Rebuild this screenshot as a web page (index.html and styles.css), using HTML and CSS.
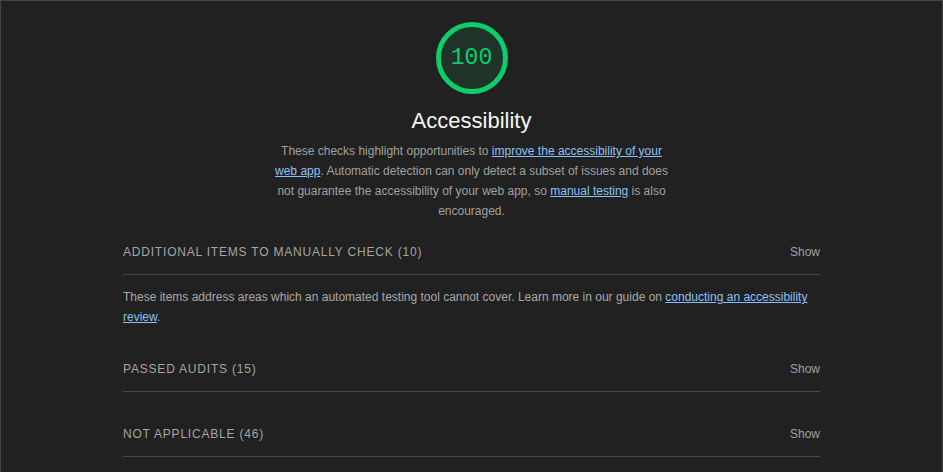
FILE: index.html
```html
<!DOCTYPE html>
<html>
<head>
<meta charset="utf-8">
<link rel="stylesheet" href="styles.css">
</head>
<body>
<div class="frame">
  <div class="category">
    <div class="gauge">
      <svg width="72" height="72" viewBox="0 0 72 72">
        <circle cx="36" cy="36" r="33.5" fill="#1f3328" stroke="#0cce6b" stroke-width="5"/>
      </svg>
      <span class="gauge-score">100</span>
    </div>
    <div class="title">Accessibility</div>
    <p class="description">These checks highlight opportunities to <a href="#">improve the accessibility of your web app</a>. Automatic detection can only detect a subset of issues and does not guarantee the accessibility of your web app, so <a href="#">manual testing</a> is also encouraged.</p>

    <div class="groups">
      <div class="group first">
        <div class="group-header"><span class="group-title">Additional items to manually check (10)</span><span class="show">Show</span></div>
        <p class="group-desc">These items address areas which an automated testing tool cannot cover. Learn more in our guide on <a href="#">conducting an accessibility review</a>.</p>
      </div>
      <div class="group">
        <div class="group-header"><span class="group-title">Passed audits (15)</span><span class="show">Show</span></div>
      </div>
      <div class="group">
        <div class="group-header"><span class="group-title">Not applicable (46)</span><span class="show">Show</span></div>
      </div>
    </div>
  </div>
</div>
</body>
</html>
```

FILE: styles.css
```css
html, body {
  margin: 0;
  padding: 0;
  background: #212121;
}
body {
  font-family: "Liberation Sans", Arial, sans-serif;
  color: #9e9e9e;
  overflow: hidden;
}
.frame {
  border: 1px solid #464646;
  border-bottom: none;
  height: 100vh;
  box-sizing: border-box;
  overflow: hidden;
}
.category {
  width: 697px;
  margin: 0 auto;
  display: flex;
  flex-direction: column;
  align-items: center;
  padding-top: 21px;
}
.gauge {
  position: relative;
  width: 72px;
  height: 72px;
}
.gauge svg {
  display: block;
}
.gauge-score {
  position: absolute;
  inset: 0;
  display: flex;
  align-items: center;
  justify-content: center;
  font-family: "Liberation Mono", monospace;
  font-size: 23px;
  color: #0cce6b;
}
.title {
  margin-top: 13px;
  font-size: 22px;
  line-height: 28px;
  color: #f5f5f5;
}
.description {
  margin: 6px 0 0;
  width: 400px;
  text-align: center;
  font-size: 12px;
  line-height: 20px;
  color: #a0a0a0;
}
a {
  color: #8cc0f8;
  text-decoration: underline;
}
.groups {
  align-self: stretch;
  margin-top: 10px;
}
.group {
  margin-top: 21px;
}
.group.first {
  margin-top: 0;
}
.group-header {
  display: flex;
  justify-content: space-between;
  align-items: center;
  padding: 11px 0 12px;
  border-bottom: 1px solid #474747;
  font-size: 12px;
  line-height: 20px;
}
.group-title {
  text-transform: uppercase;
  letter-spacing: 0.8px;
  color: #a5a5a5;
}
.show {
  color: #a0a0a0;
}
.group-desc {
  margin: 12px 0 0;
  font-size: 12px;
  line-height: 20px;
  color: #a8a8a8;
}
```
